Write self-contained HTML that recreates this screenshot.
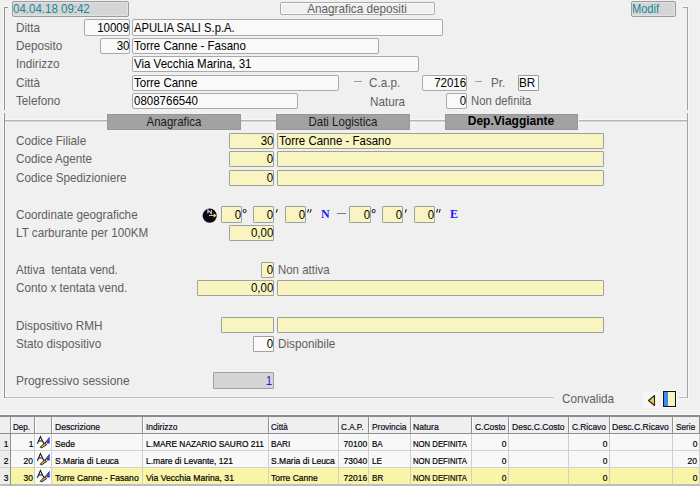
<!DOCTYPE html>
<html><head><meta charset="utf-8"><style>
html,body{margin:0;padding:0;}
body{width:700px;height:486px;background:#f0f0f0;position:relative;overflow:hidden;font-family:"Liberation Sans", sans-serif;}
body>div,body>svg{position:absolute;box-sizing:content-box;}
.t{white-space:nowrap;line-height:13px;}
</style></head><body>
<div style="left:12px;top:1px;width:115px;height:14px;background:#d5d5d5;border:1px solid #9c9c9c;border-radius:2px;box-shadow:inset 1px 1px #e2e2e2,inset -1px -1px #e2e2e2;"></div>
<div class="t" style="left:13px;top:2px;color:#168896;font-size:13px;font-weight:normal;transform:scaleX(0.885);transform-origin:0 0;">04.04.18 09:42</div>
<div style="left:280px;top:2px;width:153px;height:11px;background:#f0f0f0;border:1px solid #aaaaaa;border-radius:2px;box-shadow:inset 1px 1px #fdfdfd,inset -1px -1px #fdfdfd;"></div>
<div class="t" style="left:207px;width:300px;text-align:center;top:2px;color:#606060;font-size:13px;font-weight:normal;transform:scaleX(0.9);transform-origin:50% 0;">Anagrafica depositi</div>
<div style="left:631px;top:1px;width:43px;height:14px;background:#d5d5d5;border:1px solid #9c9c9c;border-radius:2px;box-shadow:inset 1px 1px #e2e2e2,inset -1px -1px #e2e2e2;"></div>
<div class="t" style="left:632px;top:2px;color:#168896;font-size:13px;font-weight:normal;transform:scaleX(0.85);transform-origin:0 0;">Modif</div>
<div style="left:3px;top:6px;width:1px;height:104px;background:#f9f9f9;"></div>
<div style="left:3px;top:6px;width:6px;height:1px;background:#f9f9f9;"></div>
<div style="left:5px;top:8px;width:1px;height:102px;background:#f6f6f6;"></div>
<div style="left:4px;top:7px;width:1px;height:103px;background:#8f8f8f;"></div>
<div style="left:4px;top:7px;width:4px;height:1px;background:#8f8f8f;"></div>
<div style="left:688px;top:6px;width:1px;height:104px;background:#f9f9f9;"></div>
<div style="left:682px;top:6px;width:7px;height:1px;background:#f9f9f9;"></div>
<div style="left:687px;top:7px;width:1px;height:103px;background:#a2a2a2;"></div>
<div style="left:683px;top:7px;width:5px;height:1px;background:#a2a2a2;"></div>
<div class="t" style="left:16px;top:21px;color:#606060;font-size:13px;font-weight:normal;transform:scaleX(0.9);transform-origin:0 0;">Ditta</div>
<div style="left:84px;top:19px;width:44px;height:15px;background:#f9f9f9;border:1px solid #a9a9a9;border-radius:2px;"></div>
<div class="t" style="right:571px;top:21px;color:#000;font-size:13px;font-weight:normal;transform:scaleX(0.885);transform-origin:100% 0;">10009</div>
<div style="left:132px;top:19px;width:309px;height:15px;background:#f9f9f9;border:1px solid #a9a9a9;border-radius:2px;"></div>
<div class="t" style="left:134px;top:21px;color:#000;font-size:13px;font-weight:normal;transform:scaleX(0.865);transform-origin:0 0;">APULIA SALI S.p.A.</div>
<div class="t" style="left:16px;top:39px;color:#606060;font-size:13px;font-weight:normal;transform:scaleX(0.9);transform-origin:0 0;">Deposito</div>
<div style="left:100px;top:38px;width:28px;height:14px;background:#f9f9f9;border:1px solid #a9a9a9;border-radius:2px;"></div>
<div class="t" style="right:571px;top:39px;color:#000;font-size:13px;font-weight:normal;transform:scaleX(0.885);transform-origin:100% 0;">30</div>
<div style="left:132px;top:38px;width:245px;height:14px;background:#f9f9f9;border:1px solid #a9a9a9;border-radius:2px;"></div>
<div class="t" style="left:134px;top:39px;color:#000;font-size:13px;font-weight:normal;transform:scaleX(0.885);transform-origin:0 0;">Torre Canne - Fasano</div>
<div class="t" style="left:16px;top:57px;color:#606060;font-size:13px;font-weight:normal;transform:scaleX(0.9);transform-origin:0 0;">Indirizzo</div>
<div style="left:132px;top:56px;width:285px;height:14px;background:#f9f9f9;border:1px solid #a9a9a9;border-radius:2px;"></div>
<div class="t" style="left:134px;top:57px;color:#000;font-size:13px;font-weight:normal;transform:scaleX(0.885);transform-origin:0 0;">Via Vecchia Marina, 31</div>
<div class="t" style="left:16px;top:76px;color:#606060;font-size:13px;font-weight:normal;transform:scaleX(0.9);transform-origin:0 0;">Città</div>
<div style="left:132px;top:75px;width:205px;height:14px;background:#f9f9f9;border:1px solid #a9a9a9;border-radius:2px;"></div>
<div class="t" style="left:134px;top:76px;color:#000;font-size:13px;font-weight:normal;transform:scaleX(0.885);transform-origin:0 0;">Torre Canne</div>
<div style="left:354px;top:81px;width:8px;height:1px;background:#a0a0a0;"></div>
<div class="t" style="left:369px;top:76px;color:#606060;font-size:13px;font-weight:normal;transform:scaleX(0.9);transform-origin:0 0;">C.a.p.</div>
<div style="left:422px;top:75px;width:43px;height:14px;background:#f9f9f9;border:1px solid #a9a9a9;border-radius:2px;"></div>
<div class="t" style="right:234px;top:76px;color:#000;font-size:13px;font-weight:normal;transform:scaleX(0.885);transform-origin:100% 0;">72016</div>
<div style="left:475px;top:81px;width:7px;height:1px;background:#a0a0a0;"></div>
<div class="t" style="left:491px;top:76px;color:#606060;font-size:13px;font-weight:normal;transform:scaleX(0.9);transform-origin:0 0;">Pr.</div>
<div style="left:518px;top:75px;width:19px;height:14px;background:#fafafa;border:1px solid #9a9a9a;border-radius:1px;"></div>
<div class="t" style="left:519px;top:76px;color:#000;font-size:13px;font-weight:normal;transform:scaleX(0.9);transform-origin:0 0;">BR</div>
<div class="t" style="left:16px;top:94px;color:#606060;font-size:13px;font-weight:normal;transform:scaleX(0.9);transform-origin:0 0;">Telefono</div>
<div style="left:132px;top:93px;width:164px;height:14px;background:#f9f9f9;border:1px solid #a9a9a9;border-radius:2px;"></div>
<div class="t" style="left:134px;top:94px;color:#000;font-size:13px;font-weight:normal;transform:scaleX(0.885);transform-origin:0 0;">0808766540</div>
<div class="t" style="left:370px;top:95px;color:#606060;font-size:13px;font-weight:normal;transform:scaleX(0.9);transform-origin:0 0;">Natura</div>
<div style="left:446px;top:93px;width:19px;height:14px;background:#f9f9f9;border:1px solid #a9a9a9;border-radius:2px;"></div>
<div class="t" style="right:234px;top:94px;color:#000;font-size:13px;font-weight:normal;transform:scaleX(0.885);transform-origin:100% 0;">0</div>
<div class="t" style="left:471px;top:94px;color:#606060;font-size:13px;font-weight:normal;transform:scaleX(0.87);transform-origin:0 0;">Non definita</div>
<div style="left:3px;top:113px;width:1px;height:286px;background:#f9f9f9;"></div>
<div style="left:5px;top:121px;width:1px;height:276px;background:#f9f9f9;"></div>
<div style="left:688px;top:113px;width:1px;height:286px;background:#f9f9f9;"></div>
<div style="left:5px;top:396px;width:549px;height:1px;background:#f9f9f9;"></div>
<div style="left:4px;top:398px;width:550px;height:1px;background:#f9f9f9;"></div>
<div style="left:679px;top:396px;width:9px;height:1px;background:#f9f9f9;"></div>
<div style="left:679px;top:398px;width:10px;height:1px;background:#f9f9f9;"></div>
<div style="left:4px;top:113px;width:1px;height:285px;background:#8f8f8f;"></div>
<div style="left:687px;top:113px;width:1px;height:285px;background:#a2a2a2;"></div>
<div style="left:5px;top:397px;width:549px;height:1px;background:#b8b8b8;"></div>
<div style="left:679px;top:397px;width:8px;height:1px;background:#b8b8b8;"></div>
<div style="left:5px;top:119px;width:102px;height:1px;background:#f8f8f8;"></div>
<div style="left:5px;top:120px;width:102px;height:1px;background:#b6b6b6;"></div>
<div style="left:5px;top:121px;width:102px;height:1px;background:#d2d2d2;"></div>
<div style="left:5px;top:122px;width:102px;height:1px;background:#f8f8f8;"></div>
<div style="left:241px;top:119px;width:35px;height:1px;background:#f8f8f8;"></div>
<div style="left:241px;top:120px;width:35px;height:1px;background:#b6b6b6;"></div>
<div style="left:241px;top:121px;width:35px;height:1px;background:#d2d2d2;"></div>
<div style="left:241px;top:122px;width:35px;height:1px;background:#f8f8f8;"></div>
<div style="left:410px;top:119px;width:35px;height:1px;background:#f8f8f8;"></div>
<div style="left:410px;top:120px;width:35px;height:1px;background:#b6b6b6;"></div>
<div style="left:410px;top:121px;width:35px;height:1px;background:#d2d2d2;"></div>
<div style="left:410px;top:122px;width:35px;height:1px;background:#f8f8f8;"></div>
<div style="left:579px;top:119px;width:108px;height:1px;background:#f8f8f8;"></div>
<div style="left:579px;top:120px;width:108px;height:1px;background:#b6b6b6;"></div>
<div style="left:579px;top:121px;width:108px;height:1px;background:#d2d2d2;"></div>
<div style="left:579px;top:122px;width:108px;height:1px;background:#f8f8f8;"></div>
<div style="left:107px;top:114px;width:132px;height:14px;background:#a2a2a2;border:1px solid #979797;"></div>
<div class="t" style="left:23.5px;width:300px;text-align:center;top:115px;color:#1a1a1a;font-size:13px;font-weight:normal;transform:scaleX(0.885);transform-origin:50% 0;">Anagrafica</div>
<div style="left:276px;top:114px;width:132px;height:14px;background:#a2a2a2;border:1px solid #979797;"></div>
<div class="t" style="left:192.5px;width:300px;text-align:center;top:115px;color:#1a1a1a;font-size:13px;font-weight:normal;transform:scaleX(0.885);transform-origin:50% 0;">Dati Logistica</div>
<div style="left:445px;top:114px;width:131px;height:14px;background:#a2a2a2;border:1px solid #979797;"></div>
<div class="t" style="left:361px;width:300px;text-align:center;top:115px;color:#000;font-size:12px;font-weight:bold;transform:scaleX(1.0);transform-origin:50% 0;">Dep.Viaggiante</div>
<div class="t" style="left:16px;top:134px;color:#606060;font-size:13px;font-weight:normal;transform:scaleX(0.9);transform-origin:0 0;">Codice Filiale</div>
<div style="left:229px;top:133px;width:43px;height:14px;background:#f8f5c0;border:1px solid #a0a0a0;border-radius:1px;"></div>
<div class="t" style="right:427px;top:134px;color:#000;font-size:13px;font-weight:normal;transform:scaleX(0.885);transform-origin:100% 0;">30</div>
<div style="left:277px;top:133px;width:325px;height:14px;background:#f8f5c0;border:1px solid #a0a0a0;border-radius:1px;"></div>
<div class="t" style="left:279px;top:134px;color:#000;font-size:13px;font-weight:normal;transform:scaleX(0.885);transform-origin:0 0;">Torre Canne - Fasano</div>
<div class="t" style="left:16px;top:152px;color:#606060;font-size:13px;font-weight:normal;transform:scaleX(0.9);transform-origin:0 0;">Codice Agente</div>
<div style="left:229px;top:151px;width:43px;height:14px;background:#f8f5c0;border:1px solid #a0a0a0;border-radius:1px;"></div>
<div class="t" style="right:427px;top:152px;color:#000;font-size:13px;font-weight:normal;transform:scaleX(0.885);transform-origin:100% 0;">0</div>
<div style="left:277px;top:151px;width:325px;height:14px;background:#f8f5c0;border:1px solid #a0a0a0;border-radius:1px;"></div>
<div class="t" style="left:16px;top:171px;color:#606060;font-size:13px;font-weight:normal;transform:scaleX(0.9);transform-origin:0 0;">Codice Spedizioniere</div>
<div style="left:229px;top:170px;width:43px;height:14px;background:#f8f5c0;border:1px solid #a0a0a0;border-radius:1px;"></div>
<div class="t" style="right:427px;top:171px;color:#000;font-size:13px;font-weight:normal;transform:scaleX(0.885);transform-origin:100% 0;">0</div>
<div style="left:277px;top:170px;width:325px;height:14px;background:#f8f5c0;border:1px solid #a0a0a0;border-radius:1px;"></div>
<div class="t" style="left:16px;top:208px;color:#606060;font-size:13px;font-weight:normal;transform:scaleX(0.9);transform-origin:0 0;">Coordinate geografiche</div>
<svg style="left:200px;top:205px" width="20" height="20" viewBox="0 0 20 20"><circle cx="9.7" cy="10.7" r="7.1" fill="#0a0814"/><path d="M7.9 8.6V4.9L11.3 8.6V4.9" stroke="#d0d0d0" stroke-width="1.1" fill="none"/><path d="M9 10.5H14" stroke="#c8d8f0" stroke-width="0.9"/><path d="M13.6 8.2L16.6 10.5L13.6 12.8Z" fill="#f4e020"/></svg>
<div style="left:221px;top:206px;width:19px;height:15px;background:#f8f5c0;border:1px solid #a0a0a0;border-radius:1px;"></div>
<div class="t" style="right:459px;top:208px;color:#000;font-size:13px;font-weight:normal;transform:scaleX(0.885);transform-origin:100% 0;">0</div>
<svg style="left:242px;top:208px" width="6" height="6" viewBox="0 0 6 6"><circle cx="2.6" cy="3.1" r="1.6" stroke="#3a3a4a" stroke-width="1.1" fill="none"/></svg>
<div style="left:253px;top:206px;width:19px;height:15px;background:#f8f5c0;border:1px solid #a0a0a0;border-radius:1px;"></div>
<div class="t" style="right:427px;top:208px;color:#000;font-size:13px;font-weight:normal;transform:scaleX(0.885);transform-origin:100% 0;">0</div>
<svg style="left:274px;top:208px" width="6" height="6" viewBox="0 0 6 6"><path d="M3.3 1.2L2.3 4.7" stroke="#2a2a3a" stroke-width="1.2"/></svg>
<div style="left:285px;top:206px;width:19px;height:15px;background:#f8f5c0;border:1px solid #a0a0a0;border-radius:1px;"></div>
<div class="t" style="right:395px;top:208px;color:#000;font-size:13px;font-weight:normal;transform:scaleX(0.885);transform-origin:100% 0;">0</div>
<svg style="left:306px;top:208px" width="7" height="6" viewBox="0 0 7 6"><path d="M2.6 1.2L1.6 4.7M5.2 1.2L4.2 4.7" stroke="#2a2a3a" stroke-width="1.2"/></svg>
<div style="left:349px;top:206px;width:20px;height:15px;background:#f8f5c0;border:1px solid #a0a0a0;border-radius:1px;"></div>
<div class="t" style="right:330px;top:208px;color:#000;font-size:13px;font-weight:normal;transform:scaleX(0.885);transform-origin:100% 0;">0</div>
<svg style="left:371px;top:208px" width="6" height="6" viewBox="0 0 6 6"><circle cx="2.6" cy="3.1" r="1.6" stroke="#3a3a4a" stroke-width="1.1" fill="none"/></svg>
<div style="left:382px;top:206px;width:19px;height:15px;background:#f8f5c0;border:1px solid #a0a0a0;border-radius:1px;"></div>
<div class="t" style="right:298px;top:208px;color:#000;font-size:13px;font-weight:normal;transform:scaleX(0.885);transform-origin:100% 0;">0</div>
<svg style="left:403px;top:208px" width="6" height="6" viewBox="0 0 6 6"><path d="M3.3 1.2L2.3 4.7" stroke="#2a2a3a" stroke-width="1.2"/></svg>
<div style="left:414px;top:206px;width:19px;height:15px;background:#f8f5c0;border:1px solid #a0a0a0;border-radius:1px;"></div>
<div class="t" style="right:266px;top:208px;color:#000;font-size:13px;font-weight:normal;transform:scaleX(0.885);transform-origin:100% 0;">0</div>
<svg style="left:435px;top:208px" width="7" height="6" viewBox="0 0 7 6"><path d="M2.6 1.2L1.6 4.7M5.2 1.2L4.2 4.7" stroke="#2a2a3a" stroke-width="1.2"/></svg>
<div class="t" style="left:321px;top:208px;font-family:'Liberation Serif',serif;font-weight:bold;font-size:12px;line-height:13px;color:#1818ff;">N</div>
<div style="left:337px;top:213px;width:9px;height:1px;background:#7a7a7a;"></div>
<div class="t" style="left:450px;top:208px;font-family:'Liberation Serif',serif;font-weight:bold;font-size:12px;line-height:13px;color:#1818ff;">E</div>
<div class="t" style="left:16px;top:226px;color:#606060;font-size:13px;font-weight:normal;transform:scaleX(0.9);transform-origin:0 0;">LT carburante per 100KM</div>
<div style="left:229px;top:225px;width:43px;height:14px;background:#f8f5c0;border:1px solid #a0a0a0;border-radius:1px;"></div>
<div class="t" style="right:427px;top:226px;color:#000;font-size:13px;font-weight:normal;transform:scaleX(0.885);transform-origin:100% 0;">0,00</div>
<div class="t" style="left:16px;top:263px;color:#606060;font-size:13px;font-weight:normal;transform:scaleX(0.886);transform-origin:0 0;">Attiva&nbsp; tentata vend.</div>
<div style="left:261px;top:262px;width:11px;height:14px;background:#f8f5c0;border:1px solid #a0a0a0;border-radius:1px;"></div>
<div class="t" style="right:427px;top:263px;color:#000;font-size:13px;font-weight:normal;transform:scaleX(0.885);transform-origin:100% 0;">0</div>
<div class="t" style="left:278px;top:263px;color:#606060;font-size:13px;font-weight:normal;transform:scaleX(0.88);transform-origin:0 0;">Non attiva</div>
<div class="t" style="left:16px;top:281px;color:#606060;font-size:13px;font-weight:normal;transform:scaleX(0.9);transform-origin:0 0;">Conto x tentata vend.</div>
<div style="left:197px;top:280px;width:75px;height:14px;background:#f8f5c0;border:1px solid #a0a0a0;border-radius:1px;"></div>
<div class="t" style="right:427px;top:281px;color:#000;font-size:13px;font-weight:normal;transform:scaleX(0.885);transform-origin:100% 0;">0,00</div>
<div style="left:277px;top:280px;width:325px;height:14px;background:#f8f5c0;border:1px solid #a0a0a0;border-radius:1px;"></div>
<div class="t" style="left:16px;top:319px;color:#606060;font-size:13px;font-weight:normal;transform:scaleX(0.9);transform-origin:0 0;">Dispositivo RMH</div>
<div style="left:221px;top:317px;width:51px;height:14px;background:#f8f5c0;border:1px solid #a0a0a0;border-radius:1px;"></div>
<div style="left:277px;top:317px;width:325px;height:14px;background:#f8f5c0;border:1px solid #a0a0a0;border-radius:1px;"></div>
<div class="t" style="left:16px;top:337px;color:#606060;font-size:13px;font-weight:normal;transform:scaleX(0.9);transform-origin:0 0;">Stato dispositivo</div>
<div style="left:253px;top:336px;width:19px;height:14px;background:#fafafa;border:1px solid #a0a0a0;border-radius:1px;"></div>
<div class="t" style="right:427px;top:337px;color:#000;font-size:13px;font-weight:normal;transform:scaleX(0.885);transform-origin:100% 0;">0</div>
<div class="t" style="left:278px;top:337px;color:#606060;font-size:13px;font-weight:normal;transform:scaleX(0.9);transform-origin:0 0;">Disponibile</div>
<div class="t" style="left:16px;top:374px;color:#606060;font-size:13px;font-weight:normal;transform:scaleX(0.92);transform-origin:0 0;">Progressivo sessione</div>
<div style="left:213px;top:372px;width:59px;height:15px;background:#d5d5d5;border:1px solid #a0a0a0;border-radius:1px;"></div>
<div class="t" style="right:428px;top:374px;color:#1c1cf0;font-size:13px;font-weight:normal;transform:scaleX(0.885);transform-origin:100% 0;">1</div>
<div class="t" style="left:562px;top:392px;color:#606060;font-size:13px;font-weight:normal;transform:scaleX(0.9);transform-origin:0 0;">Convalida</div>
<div style="left:643px;top:392px;width:16px;height:16px;background:#f7f7f7;"></div>
<svg style="left:647px;top:394px" width="9" height="13" viewBox="0 0 9 13"><path d="M1.5 6.5L7.5 1.5V11.5Z" fill="#f0d228" stroke="#222" stroke-width="1.1" stroke-linejoin="round"/></svg>
<div style="left:662px;top:390px;width:15px;height:18px;background:#fbfbfb;"></div>
<div style="left:663px;top:391px;width:11px;height:14px;background:#f8f5bd;border:1px solid #111;"></div>
<div style="left:664px;top:392px;width:4px;height:14px;background:#3a8ef0;"></div>
<div style="left:0px;top:414px;width:700px;height:1px;background:#fafafa;"></div>
<div style="left:0px;top:415px;width:700px;height:2px;background:#8a8a8a;"></div>
<div style="left:0px;top:417px;width:700px;height:16px;background:#efefef;"></div>
<div style="left:0px;top:433px;width:700px;height:1px;background:#8f8f8f;"></div>
<div style="left:11px;top:434px;width:689px;height:17px;background:#f8f8f8;"></div>
<div style="left:0px;top:434px;width:10px;height:17px;background:#ececec;"></div>
<div style="left:0px;top:450px;width:700px;height:1px;background:#d2d2d2;"></div>
<div style="left:11px;top:451px;width:689px;height:17px;background:#f8f8f8;"></div>
<div style="left:0px;top:451px;width:10px;height:17px;background:#ececec;"></div>
<div style="left:0px;top:467px;width:700px;height:1px;background:#d2d2d2;"></div>
<div style="left:11px;top:468px;width:689px;height:17px;background:#f8f4a8;"></div>
<div style="left:0px;top:468px;width:10px;height:17px;background:#ececec;"></div>
<div style="left:0px;top:484px;width:700px;height:1px;background:#d2d2d2;"></div>
<div style="left:0px;top:484px;width:700px;height:2px;background:#bdbdbd;"></div>
<div style="left:10px;top:417px;width:1px;height:17px;background:#8f8f8f;"></div>
<div style="left:10px;top:434px;width:1px;height:51px;background:#8f8f8f;"></div>
<div style="left:11px;top:417px;width:1px;height:16px;background:#ffffff;"></div>
<div style="left:34px;top:417px;width:1px;height:17px;background:#8f8f8f;"></div>
<div style="left:34px;top:434px;width:1px;height:51px;background:#cfcfcf;"></div>
<div style="left:35px;top:417px;width:1px;height:16px;background:#ffffff;"></div>
<div style="left:51px;top:417px;width:1px;height:17px;background:#8f8f8f;"></div>
<div style="left:51px;top:434px;width:1px;height:51px;background:#cfcfcf;"></div>
<div style="left:52px;top:417px;width:1px;height:16px;background:#ffffff;"></div>
<div style="left:142px;top:417px;width:1px;height:17px;background:#8f8f8f;"></div>
<div style="left:142px;top:434px;width:1px;height:51px;background:#cfcfcf;"></div>
<div style="left:143px;top:417px;width:1px;height:16px;background:#ffffff;"></div>
<div style="left:268px;top:417px;width:1px;height:17px;background:#8f8f8f;"></div>
<div style="left:268px;top:434px;width:1px;height:51px;background:#cfcfcf;"></div>
<div style="left:269px;top:417px;width:1px;height:16px;background:#ffffff;"></div>
<div style="left:338px;top:417px;width:1px;height:17px;background:#8f8f8f;"></div>
<div style="left:338px;top:434px;width:1px;height:51px;background:#cfcfcf;"></div>
<div style="left:339px;top:417px;width:1px;height:16px;background:#ffffff;"></div>
<div style="left:368px;top:417px;width:1px;height:17px;background:#8f8f8f;"></div>
<div style="left:368px;top:434px;width:1px;height:51px;background:#cfcfcf;"></div>
<div style="left:369px;top:417px;width:1px;height:16px;background:#ffffff;"></div>
<div style="left:410px;top:417px;width:1px;height:17px;background:#8f8f8f;"></div>
<div style="left:410px;top:434px;width:1px;height:51px;background:#cfcfcf;"></div>
<div style="left:411px;top:417px;width:1px;height:16px;background:#ffffff;"></div>
<div style="left:471px;top:417px;width:1px;height:17px;background:#8f8f8f;"></div>
<div style="left:471px;top:434px;width:1px;height:51px;background:#cfcfcf;"></div>
<div style="left:472px;top:417px;width:1px;height:16px;background:#ffffff;"></div>
<div style="left:508px;top:417px;width:1px;height:17px;background:#8f8f8f;"></div>
<div style="left:508px;top:434px;width:1px;height:51px;background:#cfcfcf;"></div>
<div style="left:509px;top:417px;width:1px;height:16px;background:#ffffff;"></div>
<div style="left:568px;top:417px;width:1px;height:17px;background:#8f8f8f;"></div>
<div style="left:568px;top:434px;width:1px;height:51px;background:#cfcfcf;"></div>
<div style="left:569px;top:417px;width:1px;height:16px;background:#ffffff;"></div>
<div style="left:609px;top:417px;width:1px;height:17px;background:#8f8f8f;"></div>
<div style="left:609px;top:434px;width:1px;height:51px;background:#cfcfcf;"></div>
<div style="left:610px;top:417px;width:1px;height:16px;background:#ffffff;"></div>
<div style="left:672px;top:417px;width:1px;height:17px;background:#8f8f8f;"></div>
<div style="left:672px;top:434px;width:1px;height:51px;background:#cfcfcf;"></div>
<div style="left:673px;top:417px;width:1px;height:16px;background:#ffffff;"></div>
<div style="left:699px;top:417px;width:1px;height:17px;background:#8f8f8f;"></div>
<div style="left:699px;top:434px;width:1px;height:51px;background:#cfcfcf;"></div>
<div style="left:700px;top:417px;width:1px;height:16px;background:#ffffff;"></div>
<div style="left:35px;top:434px;width:16px;height:16px;background:#fbfbfb;"></div>
<div style="left:35px;top:451px;width:16px;height:16px;background:#fbfbfb;"></div>
<div style="left:35px;top:468px;width:16px;height:16px;background:#fbfbfb;"></div>
<div class="t" style="left:13px;top:420px;font-size:9.75px;color:#0a0a1a;transform:scaleX(0.8240);-webkit-text-stroke:0.2px #0a0a1a;transform-origin:0 0;">Dep.</div>
<div class="t" style="left:55px;top:420px;font-size:9.75px;color:#0a0a1a;transform:scaleX(0.8834);-webkit-text-stroke:0.2px #0a0a1a;transform-origin:0 0;">Descrizione</div>
<div class="t" style="left:146px;top:420px;font-size:9.75px;color:#0a0a1a;transform:scaleX(0.8639);-webkit-text-stroke:0.2px #0a0a1a;transform-origin:0 0;">Indirizzo</div>
<div class="t" style="left:271px;top:420px;font-size:9.75px;color:#0a0a1a;transform:scaleX(0.8328);-webkit-text-stroke:0.2px #0a0a1a;transform-origin:0 0;">Città</div>
<div class="t" style="left:341px;top:420px;font-size:9.75px;color:#0a0a1a;transform:scaleX(0.8367);-webkit-text-stroke:0.2px #0a0a1a;transform-origin:0 0;">C.A.P.</div>
<div class="t" style="left:372px;top:420px;font-size:9.75px;color:#0a0a1a;transform:scaleX(0.8591);-webkit-text-stroke:0.2px #0a0a1a;transform-origin:0 0;">Provincia</div>
<div class="t" style="left:413px;top:420px;font-size:9.75px;color:#0a0a1a;transform:scaleX(0.8785);-webkit-text-stroke:0.2px #0a0a1a;transform-origin:0 0;">Natura</div>
<div class="t" style="left:475px;top:420px;font-size:9.75px;color:#0a0a1a;transform:scaleX(0.8630);-webkit-text-stroke:0.2px #0a0a1a;transform-origin:0 0;">C.Costo</div>
<div class="t" style="left:512px;top:420px;font-size:9.75px;color:#0a0a1a;transform:scaleX(0.8747);-webkit-text-stroke:0.2px #0a0a1a;transform-origin:0 0;">Desc.C.Costo</div>
<div class="t" style="left:572px;top:420px;font-size:9.75px;color:#0a0a1a;transform:scaleX(0.8552);-webkit-text-stroke:0.2px #0a0a1a;transform-origin:0 0;">C.Ricavo</div>
<div class="t" style="left:612px;top:420px;font-size:9.75px;color:#0a0a1a;transform:scaleX(0.8824);-webkit-text-stroke:0.2px #0a0a1a;transform-origin:0 0;">Desc.C.Ricavo</div>
<div class="t" style="left:676px;top:420px;font-size:9.75px;color:#0a0a1a;transform:scaleX(0.8464);-webkit-text-stroke:0.2px #0a0a1a;transform-origin:0 0;">Serie</div>
<div class="t" style="right:692px;top:437px;font-size:9.75px;color:#000;transform:scaleX(0.8669);-webkit-text-stroke:0.2px #000;transform-origin:100% 0;">1</div>
<div class="t" style="right:667px;top:437px;font-size:9.75px;color:#000;transform:scaleX(0.8669);-webkit-text-stroke:0.2px #000;transform-origin:100% 0;">1</div>
<div class="t" style="left:55px;top:437px;font-size:9.75px;color:#000;transform:scaleX(0.8766);-webkit-text-stroke:0.2px #000;transform-origin:0 0;">Sede</div>
<div class="t" style="left:146px;top:437px;font-size:9.75px;color:#000;transform:scaleX(0.8552);-webkit-text-stroke:0.2px #000;transform-origin:0 0;">L.MARE NAZARIO SAURO 211</div>
<div class="t" style="left:271px;top:437px;font-size:9.75px;color:#000;transform:scaleX(0.8445);-webkit-text-stroke:0.2px #000;transform-origin:0 0;">BARI</div>
<div class="t" style="right:333px;top:437px;font-size:9.75px;color:#000;transform:scaleX(0.8669);-webkit-text-stroke:0.2px #000;transform-origin:100% 0;">70100</div>
<div class="t" style="left:372px;top:437px;font-size:9.75px;color:#000;transform:scaleX(0.8211);-webkit-text-stroke:0.2px #000;transform-origin:0 0;">BA</div>
<div class="t" style="left:413px;top:437px;font-size:9.75px;color:#000;transform:scaleX(0.7919);-webkit-text-stroke:0.2px #000;transform-origin:0 0;">NON DEFINITA</div>
<div class="t" style="right:194px;top:437px;font-size:9.75px;color:#000;transform:scaleX(0.8669);-webkit-text-stroke:0.2px #000;transform-origin:100% 0;">0</div>
<div class="t" style="right:93px;top:437px;font-size:9.75px;color:#000;transform:scaleX(0.8669);-webkit-text-stroke:0.2px #000;transform-origin:100% 0;">0</div>
<div class="t" style="right:3px;top:437px;font-size:9.75px;color:#000;transform:scaleX(0.8669);-webkit-text-stroke:0.2px #000;transform-origin:100% 0;">0</div>
<svg style="left:34px;top:433px" width="20" height="19" viewBox="0 0 20 19"><path d="M3.4 10.8L6.4 3.6L9.9 10.8M4.8 8H8.5" stroke="#151515" stroke-width="1.1" fill="none"/><path d="M12.2 9.4L15.6 4.6L15.8 10.4L13.2 10.6Z" fill="#2438f4"/><path d="M10.3 10.8L15.6 4.4" stroke="#1a1a30" stroke-width="1"/><path d="M6.2 14.3L10.5 9.9L12.8 11.5L7.8 14.8Z" fill="#e8b020" stroke="#151515" stroke-width="0.9" stroke-linejoin="round"/></svg>
<div class="t" style="right:692px;top:454px;font-size:9.75px;color:#000;transform:scaleX(0.8669);-webkit-text-stroke:0.2px #000;transform-origin:100% 0;">2</div>
<div class="t" style="right:667px;top:454px;font-size:9.75px;color:#000;transform:scaleX(0.8669);-webkit-text-stroke:0.2px #000;transform-origin:100% 0;">20</div>
<div class="t" style="left:55px;top:454px;font-size:9.75px;color:#000;transform:scaleX(0.8727);-webkit-text-stroke:0.2px #000;transform-origin:0 0;">S.Maria di Leuca</div>
<div class="t" style="left:146px;top:454px;font-size:9.75px;color:#000;transform:scaleX(0.8717);-webkit-text-stroke:0.2px #000;transform-origin:0 0;">L.mare di Levante, 121</div>
<div class="t" style="left:271px;top:454px;font-size:9.75px;color:#000;transform:scaleX(0.8727);-webkit-text-stroke:0.2px #000;transform-origin:0 0;">S.Maria di Leuca</div>
<div class="t" style="right:333px;top:454px;font-size:9.75px;color:#000;transform:scaleX(0.8669);-webkit-text-stroke:0.2px #000;transform-origin:100% 0;">73040</div>
<div class="t" style="left:372px;top:454px;font-size:9.75px;color:#000;transform:scaleX(0.8279);-webkit-text-stroke:0.2px #000;transform-origin:0 0;">LE</div>
<div class="t" style="left:413px;top:454px;font-size:9.75px;color:#000;transform:scaleX(0.7919);-webkit-text-stroke:0.2px #000;transform-origin:0 0;">NON DEFINITA</div>
<div class="t" style="right:194px;top:454px;font-size:9.75px;color:#000;transform:scaleX(0.8669);-webkit-text-stroke:0.2px #000;transform-origin:100% 0;">0</div>
<div class="t" style="right:93px;top:454px;font-size:9.75px;color:#000;transform:scaleX(0.8669);-webkit-text-stroke:0.2px #000;transform-origin:100% 0;">0</div>
<div class="t" style="right:3px;top:454px;font-size:9.75px;color:#000;transform:scaleX(0.8669);-webkit-text-stroke:0.2px #000;transform-origin:100% 0;">20</div>
<svg style="left:34px;top:450px" width="20" height="19" viewBox="0 0 20 19"><path d="M3.4 10.8L6.4 3.6L9.9 10.8M4.8 8H8.5" stroke="#151515" stroke-width="1.1" fill="none"/><path d="M12.2 9.4L15.6 4.6L15.8 10.4L13.2 10.6Z" fill="#2438f4"/><path d="M10.3 10.8L15.6 4.4" stroke="#1a1a30" stroke-width="1"/><path d="M6.2 14.3L10.5 9.9L12.8 11.5L7.8 14.8Z" fill="#e8b020" stroke="#151515" stroke-width="0.9" stroke-linejoin="round"/></svg>
<div class="t" style="right:692px;top:471px;font-size:9.75px;color:#000;transform:scaleX(0.8669);-webkit-text-stroke:0.2px #000;transform-origin:100% 0;">3</div>
<div class="t" style="right:667px;top:471px;font-size:9.75px;color:#000;transform:scaleX(0.8669);-webkit-text-stroke:0.2px #000;transform-origin:100% 0;">30</div>
<div class="t" style="left:55px;top:471px;font-size:9.75px;color:#000;transform:scaleX(0.8824);-webkit-text-stroke:0.2px #000;transform-origin:0 0;">Torre Canne - Fasano</div>
<div class="t" style="left:146px;top:471px;font-size:9.75px;color:#000;transform:scaleX(0.8834);-webkit-text-stroke:0.2px #000;transform-origin:0 0;">Via Vecchia Marina, 31</div>
<div class="t" style="left:271px;top:471px;font-size:9.75px;color:#000;transform:scaleX(0.8708);-webkit-text-stroke:0.2px #000;transform-origin:0 0;">Torre Canne</div>
<div class="t" style="right:333px;top:471px;font-size:9.75px;color:#000;transform:scaleX(0.8669);-webkit-text-stroke:0.2px #000;transform-origin:100% 0;">72016</div>
<div class="t" style="left:372px;top:471px;font-size:9.75px;color:#000;transform:scaleX(0.8279);-webkit-text-stroke:0.2px #000;transform-origin:0 0;">BR</div>
<div class="t" style="left:413px;top:471px;font-size:9.75px;color:#000;transform:scaleX(0.7919);-webkit-text-stroke:0.2px #000;transform-origin:0 0;">NON DEFINITA</div>
<div class="t" style="right:194px;top:471px;font-size:9.75px;color:#000;transform:scaleX(0.8669);-webkit-text-stroke:0.2px #000;transform-origin:100% 0;">0</div>
<div class="t" style="right:93px;top:471px;font-size:9.75px;color:#000;transform:scaleX(0.8669);-webkit-text-stroke:0.2px #000;transform-origin:100% 0;">0</div>
<div class="t" style="right:3px;top:471px;font-size:9.75px;color:#000;transform:scaleX(0.8669);-webkit-text-stroke:0.2px #000;transform-origin:100% 0;">0</div>
<svg style="left:34px;top:467px" width="20" height="19" viewBox="0 0 20 19"><path d="M3.4 10.8L6.4 3.6L9.9 10.8M4.8 8H8.5" stroke="#151515" stroke-width="1.1" fill="none"/><path d="M12.2 9.4L15.6 4.6L15.8 10.4L13.2 10.6Z" fill="#2438f4"/><path d="M10.3 10.8L15.6 4.4" stroke="#1a1a30" stroke-width="1"/><path d="M6.2 14.3L10.5 9.9L12.8 11.5L7.8 14.8Z" fill="#e8b020" stroke="#151515" stroke-width="0.9" stroke-linejoin="round"/></svg>
</body></html>
